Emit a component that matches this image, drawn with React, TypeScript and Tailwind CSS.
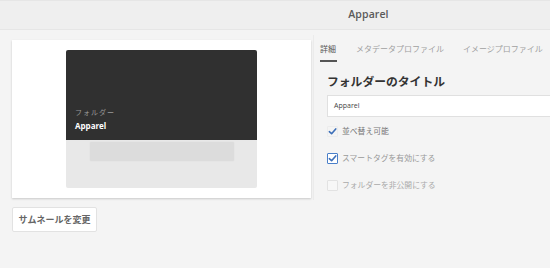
import React from "react";

const jp = { fontFamily: '"Open Sans", "Noto Sans CJK JP", sans-serif' };

function Check({ checked, focused }: { checked?: boolean; focused?: boolean }) {
  return (
    <div
      className={
        "w-[11px] h-[11px] flex items-center justify-center rounded-[1px] border " +
        (focused ? "border-[#4a7fc9] bg-white" : checked ? "border-[#ececec] bg-[#f4f4f4]" : "border-[#e2e2e2] bg-[#f7f7f7]")
      }
    >
      {checked && (
        <svg width="9" height="9" viewBox="0 0 10 10">
          <path d="M1.5 5.2 L4 7.5 L8.6 2.2" fill="none" stroke="#3d6fb8" strokeWidth="1.8" strokeLinecap="round" strokeLinejoin="round" />
        </svg>
      )}
    </div>
  );
}

export default function App() {
  return (
    <div className="w-[550px] h-[268px] bg-[#f4f4f4] overflow-hidden" style={jp}>
      <div className="h-[30px] bg-[#efefef] border-t border-t-[#e6e6e6] border-b border-b-[#e6e6e6] flex items-center justify-center pl-[187px]">
        <span className="text-[10.5px] font-semibold text-[#5a5a5a] tracking-[0.1px]">Apparel</span>
      </div>
      <div className="flex">
        <div className="pl-[12px] pt-[10px] w-[313px] shrink-0">
          <div className="w-[299px] h-[158px] bg-white shadow-[0_1px_2px_rgba(0,0,0,0.18)] flex justify-center pt-[10px]">
            <div className="w-[191px] h-[138px] flex flex-col">
              <div className="h-[90px] bg-[#303030] rounded-t-[2px] flex flex-col justify-end pl-[9px] pb-[9px]">
                <span className="text-[7px] leading-[10px] text-[#9a9a9a] tracking-[1px]">フォルダー</span>
                <span className="text-[8px] leading-[11px] font-bold text-white mt-[2px]">Apparel</span>
              </div>
              <div className="flex-1 bg-[#e8e8e8] rounded-b-[2px] flex justify-center">
                <div className="w-[144px] h-[19px] mt-[2px] bg-[#dcdcdc] rounded-[1px] shadow-[0_0_2px_rgba(0,0,0,0.05)]" />
              </div>
            </div>
          </div>
          <button className="mt-[9px] w-[85px] h-[25px] bg-white border border-[#e2e2e2] rounded-[2px] text-[9px] font-bold text-[#666] flex items-center justify-center">
            サムネールを変更
          </button>
        </div>
        <div className="flex-1 min-w-0 mt-[5px] border-l border-l-[#ebebeb] h-[165px] pl-[6px]">
          <div className="flex items-start pt-[9px] gap-[19px] whitespace-nowrap">
            <div className="flex flex-col items-start shrink-0">
              <span className="text-[8px] leading-[10px] text-[#555]">詳細</span>
              <div className="w-[17px] h-[2px] bg-[#555] mt-[6px]" />
            </div>
            <span className="shrink-0 text-[8px] leading-[10px] text-[#a0a0a0]">メタデータプロファイル</span>
            <span className="shrink-0 text-[8px] leading-[10px] text-[#a0a0a0]">イメージプロファイル</span>
          </div>
          <div className="pl-[7px]">
            <div className="mt-[11px] text-[11.8px] leading-[16px] font-bold text-[#333] whitespace-nowrap">フォルダーのタイトル</div>
            <div className="mt-[6px] h-[22px] bg-white border border-[#e0e0e0] border-r-0 flex items-center pl-[6px]">
              <span className="text-[7px] text-[#444]">Apparel</span>
            </div>
            <div className="mt-[9px] flex flex-col gap-[16px]">
              <div className="flex items-center gap-[4px] h-[11px]">
                <Check checked />
                <span className="text-[7.8px] text-[#777]">並べ替え可能</span>
              </div>
              <div className="flex items-center gap-[4px] h-[11px]">
                <Check checked focused />
                <span className="text-[7.8px] text-[#999]">スマートタグを有効にする</span>
              </div>
              <div className="flex items-center gap-[4px] h-[11px]">
                <Check />
                <span className="text-[7.8px] text-[#aaa]">フォルダーを非公開にする</span>
              </div>
            </div>
          </div>
        </div>
      </div>
    </div>
  );
}
